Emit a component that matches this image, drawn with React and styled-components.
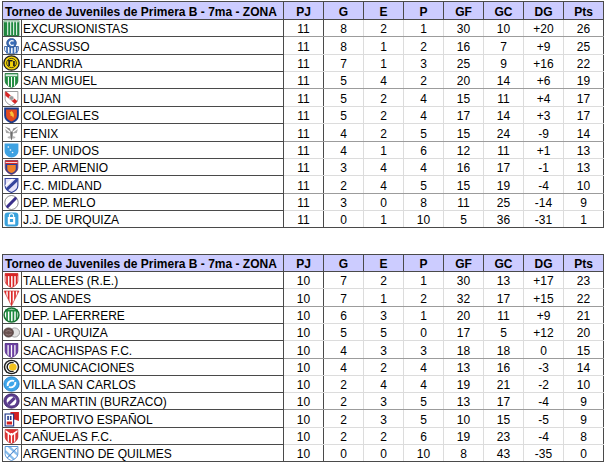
import React from "react";
import styled, { createGlobalStyle } from "styled-components";

const Global = createGlobalStyle`
  html, body { margin: 0; padding: 0; background: #fff; }
  body { font-family: "Liberation Sans", Arial, sans-serif; }
`;

const Page = styled.div`
  display: flex;
  flex-direction: column;
  gap: 26px;
  padding: 1px 0 0 2px;
`;

const Table = styled.table`
  border-collapse: collapse;
  table-layout: fixed;
  width: 601px;
  font-size: 12px;
  color: #000;
`;

const Col = styled.col`
  width: ${(p) => p.$w}px;
`;

const HeadRow = styled.tr`
  height: ${(p) => p.$h}px;
  background: #ccccff;
`;

const HeadTitle = styled.th`
  border: 1px solid #4a4a4a;
  text-align: left;
  padding: 0 0 0 2px;
  font-weight: bold;
  vertical-align: bottom;
  line-height: 14px;
  white-space: nowrap;
  overflow: hidden;
`;

const HeadStat = styled.th`
  border: 1px solid #4a4a4a;
  text-align: center;
  padding: 0;
  font-weight: bold;
  vertical-align: bottom;
  line-height: 14px;
`;

const Row = styled.tr`
  height: ${(p) => p.$h}px;
`;

const IconCell = styled.td`
  border: 1px solid #4a4a4a;
  padding: 0;
  vertical-align: middle;
  line-height: 0;
  svg {
    display: block;
    width: 17px;
    height: 16px;
    margin: 0;
  }
`;

const NameCell = styled.td`
  border: 1px solid #4a4a4a;
  padding: 0 0 0 1px;
  vertical-align: bottom;
  line-height: 14px;
  white-space: nowrap;
  overflow: hidden;
`;

const StatCell = styled.td`
  padding: 0;
  text-align: center;
  vertical-align: bottom;
  line-height: 14px;
  border-left: 1px solid ${(p) => (p.$first ? "#4a4a4a" : "#dcdcdc")};
  border-right: 1px solid ${(p) => (p.$first || p.$last ? "#4a4a4a" : "#dcdcdc")};
  border-bottom: 1px solid
    ${(p) => (p.$lastRow ? "#4a4a4a" : p.$accent ? "#9c9c9c" : "#dcdcdc")};
`;

const SH = "M2 1.5H14V8.5C14 12 11.2 14.3 8 15.6C4.8 14.3 2 12 2 8.5Z";

const Icon = ({ children, id }) => (
  <svg viewBox="0 0 16 16" preserveAspectRatio="none" aria-hidden="true">
    <defs>
      <clipPath id={`c-${id}`}>
        <path d={SH} />
      </clipPath>
      <clipPath id={`o-${id}`}>
        <circle cx="8" cy="8" r="7" />
      </clipPath>
    </defs>
    {children(`url(#c-${id})`, `url(#o-${id})`)}
  </svg>
);

const stripes = (xs, w, color, y = 0, h = 16) =>
  xs.map((x) => <rect key={x} x={x} y={y} width={w} height={h} fill={color} />);

const crests = {
  excursionistas: (id) => (
    <Icon id={id}>
      {() => (
        <g>
          <rect x="1" y="1" width="14" height="14.5" fill="#1f8a3f" stroke="#17702f" strokeWidth="0.8" />
          {stripes([4, 6.8, 9.6, 12.4], 0.9, "#fff", 1.5, 13.5)}
          <rect x="1" y="1" width="14" height="1.3" fill="#fff" opacity="0.6" />
        </g>
      )}
    </Icon>
  ),
  acassuso: (id) => (
    <Icon id={id}>
      {() => (
        <g>
          <path d="M1.5 8.5H14.5V11.5C14.5 14 11 15.8 8 15.8C5 15.8 1.5 14 1.5 11.5Z" fill="#fff" stroke="#2c5597" strokeWidth="0.8" />
          {stripes([3, 6, 9, 12], 1.6, "#3a6cb5", 8.5, 7)}
          <circle cx="8" cy="5" r="4.6" fill="#3a6cb5" stroke="#24467f" strokeWidth="0.6" />
          <path d="M10 3.3A2.3 2.3 0 1 0 10 6.7" fill="none" stroke="#fff" strokeWidth="1.2" />
        </g>
      )}
    </Icon>
  ),
  flandria: (id) => (
    <Icon id={id}>
      {() => (
        <g>
          <circle cx="8" cy="8" r="7.2" fill="#f2d20a" stroke="#1e1e1e" strokeWidth="1.3" />
          <circle cx="8" cy="8" r="4.6" fill="none" stroke="#2a2a10" strokeWidth="0.8" />
          <rect x="5" y="5" width="1.6" height="6" fill="#1e1e1e" />
          <rect x="5" y="5" width="4" height="1.4" fill="#1e1e1e" />
          <rect x="9.5" y="6" width="1.6" height="5" fill="#1e1e1e" />
        </g>
      )}
    </Icon>
  ),
  sanmiguel: (id) => (
    <Icon id={id}>
      {(clip) => (
        <g>
          <path d={SH} fill="#1f8c3e" stroke="#146a2c" strokeWidth="0.7" />
          <g clipPath={clip}>{stripes([4.6, 7.5, 10.4], 1, "#fff", 5, 11)}</g>
          <rect x="2.5" y="2.3" width="11" height="2" fill="#fff" opacity="0.85" />
        </g>
      )}
    </Icon>
  ),
  lujan: (id) => (
    <Icon id={id}>
      {(clip) => (
        <g>
          <path d={SH} fill="#fff" stroke="#8a8a8a" strokeWidth="0.8" />
          <g clipPath={clip}>
            <line x1="1" y1="2" x2="15" y2="15" stroke="#d62626" strokeWidth="3.4" />
          </g>
          <circle cx="8" cy="8" r="2.3" fill="#9a9a9a" stroke="#fff" strokeWidth="0.6" />
        </g>
      )}
    </Icon>
  ),
  colegiales: (id) => (
    <Icon id={id}>
      {() => (
        <g>
          <path d={SH} fill="#e24a1e" stroke="#1d3c8c" strokeWidth="1.8" />
          <path d="M8 4C10 6 11 8 9.5 11C9 9 8 8.5 7 9C7.5 7 6.5 6 6 5C7 5.5 7.5 5 8 4Z" fill="#f9c33a" />
        </g>
      )}
    </Icon>
  ),
  fenix: (id) => (
    <Icon id={id}>
      {() => (
        <g>
          <path d="M1.5 1.5L7.5 7L6.5 3.5ZM14.5 1.5L8.5 7L9.5 3.5Z" fill="#8c8c8c" />
          <path d="M2 4L7.5 8.5L3 8ZM14 4L8.5 8.5L13 8Z" fill="#a8a8a8" />
          <path d="M6.8 6.5H9.2L9 13L8 15.5L7 13Z" fill="#6e6e6e" />
          <path d="M4 12L7 11L6 14ZM12 12L9 11L10 14Z" fill="#b4b4b4" />
        </g>
      )}
    </Icon>
  ),
  defunidos: (id) => (
    <Icon id={id}>
      {() => (
        <g>
          <path d="M1.5 1.5H14.5V9C14.5 12.5 11.5 15.5 8 15.5C4.5 15.5 1.5 12.5 1.5 9Z" fill="#3ea2e2" />
          <circle cx="5" cy="5" r="0.8" fill="#fff" />
          <circle cx="7" cy="8" r="0.8" fill="#fff" />
          <circle cx="9" cy="10.5" r="0.8" fill="#fff" />
        </g>
      )}
    </Icon>
  ),
  armenio: (id) => (
    <Icon id={id}>
      {(clip) => (
        <g>
          <g clipPath={clip}>
            <rect x="0" y="0" width="16" height="5" fill="#d42a2a" />
            <rect x="0" y="3.2" width="16" height="0.8" fill="#fff" />
            <rect x="0" y="5" width="16" height="11" fill="#2a3f9a" />
            <path d="M4 6H12V10C12 12 10 13.5 8 14C6 13.5 4 12 4 10Z" fill="#f08028" />
          </g>
          <path d={SH} fill="none" stroke="#7a2a4a" strokeWidth="0.7" />
        </g>
      )}
    </Icon>
  ),
  midland: (id) => (
    <Icon id={id}>
      {(clip) => (
        <g>
          <path d={SH} fill="#e6e2f8" stroke="#34439c" strokeWidth="1.1" />
          <g clipPath={clip}>
            <line x1="14" y1="2" x2="2" y2="14" stroke="#34439c" strokeWidth="3" />
            <line x1="9" y1="2" x2="2" y2="9" stroke="#fff" strokeWidth="1.2" />
          </g>
        </g>
      )}
    </Icon>
  ),
  merlo: (id) => (
    <Icon id={id}>
      {() => (
        <g>
          <defs>
            <clipPath id="merlo-e">
              <ellipse cx="8" cy="8.5" rx="6.3" ry="7" />
            </clipPath>
          </defs>
          <ellipse cx="8" cy="8.5" rx="6.3" ry="7" fill="#fff" stroke="#777" strokeWidth="0.8" />
          <g clipPath="url(#merlo-e)">
            <line x1="2" y1="15" x2="14" y2="2" stroke="#3a2f8a" strokeWidth="2.8" />
          </g>
        </g>
      )}
    </Icon>
  ),
  urquiza: (id) => (
    <Icon id={id}>
      {() => (
        <g>
          <rect x="1.5" y="1.5" width="13" height="14" rx="3" fill="#3aa2dc" />
          <path d="M6 6V4.8A2 2 0 0 1 10 4.8V6" fill="none" stroke="#fff" strokeWidth="1" />
          <rect x="4.5" y="6" width="7" height="7.5" fill="#fff" />
          <rect x="6.5" y="8" width="3" height="3" fill="#3aa2dc" />
        </g>
      )}
    </Icon>
  ),
  talleres: (id) => (
    <Icon id={id}>
      {(clip) => (
        <g>
          <path d={SH} fill="#fff" stroke="#c02020" strokeWidth="0.7" />
          <g clipPath={clip}>{stripes([3, 6, 9, 12], 1.6, "#d82424", 4, 12)}</g>
          <rect x="2" y="1.5" width="12" height="2.6" fill="#d82424" />
        </g>
      )}
    </Icon>
  ),
  losandes: (id) => (
    <Icon id={id}>
      {() => (
        <g>
          <defs>
            <clipPath id="andes-p">
              <path d="M1 1H15L8 15.8Z" />
            </clipPath>
          </defs>
          <path d="M1 1H15L8 15.8Z" fill="#fff" stroke="#c42424" strokeWidth="0.6" />
          <g clipPath="url(#andes-p)">{stripes([1.5, 4.5, 7.5, 10.5, 13.5], 1.6, "#dc2a2a")}</g>
        </g>
      )}
    </Icon>
  ),
  laferrere: (id) => (
    <Icon id={id}>
      {(_, oclip) => (
        <g>
          <circle cx="8" cy="8" r="7" fill="#fff" />
          <g clipPath={oclip}>{stripes([3, 6, 9, 12], 1.6, "#1f8a3f", 4, 12)}</g>
          <rect x="2" y="2.5" width="12" height="2" fill="#1f8a3f" />
          <circle cx="8" cy="8" r="7" fill="none" stroke="#15702f" strokeWidth="1.4" />
        </g>
      )}
    </Icon>
  ),
  uai: (id) => (
    <Icon id={id}>
      {() => (
        <g>
          <circle cx="11" cy="8.5" r="4.6" fill="#e4e4e4" stroke="#8a8a8a" strokeWidth="0.7" />
          <circle cx="5.2" cy="8.5" r="4.6" fill="#6a5250" stroke="#3e2e2e" strokeWidth="0.7" />
          <path d="M2.5 7.5Q5 5.5 8 7.5M2.5 10Q5 12 8 10" fill="none" stroke="#a89090" strokeWidth="0.6" />
        </g>
      )}
    </Icon>
  ),
  sacachispas: (id) => (
    <Icon id={id}>
      {(clip) => (
        <g>
          <path d={SH} fill="#6c3fa2" />
          <g clipPath={clip}>{stripes([4.2, 7.4, 10.6], 1.2, "#fff", 1, 15)}</g>
          <rect x="2" y="1.5" width="12" height="1.6" fill="#6c3fa2" />
          <path d={SH} fill="none" stroke="#4a2a7a" strokeWidth="0.7" />
        </g>
      )}
    </Icon>
  ),
  comunicaciones: (id) => (
    <Icon id={id}>
      {() => (
        <g>
          <circle cx="8" cy="8" r="7.3" fill="#1e1e1e" />
          <circle cx="8" cy="8" r="5.9" fill="#fff" />
          <path d="M10 3.8A4.5 4.5 0 1 0 10 12.2" fill="none" stroke="#1e1e1e" strokeWidth="1.4" />
          <circle cx="9.3" cy="8" r="3.6" fill="#f2c21e" />
        </g>
      )}
    </Icon>
  ),
  villasancarlos: (id) => (
    <Icon id={id}>
      {() => (
        <g>
          <circle cx="8" cy="8" r="7.2" fill="#3ea6ea" stroke="#1e7cc6" strokeWidth="0.8" />
          <path d="M4.5 10C3.8 6.5 7 3.8 10.5 5" fill="none" stroke="#fff" strokeWidth="1.8" />
          <path d="M11.5 6C12.2 9.5 9 12.2 5.5 11" fill="none" stroke="#fff" strokeWidth="1.8" />
        </g>
      )}
    </Icon>
  ),
  sanmartin: (id) => (
    <Icon id={id}>
      {() => (
        <g>
          <defs>
            <clipPath id="smb-i">
              <circle cx="8" cy="8" r="4.6" />
            </clipPath>
          </defs>
          <circle cx="8" cy="8" r="7.2" fill="#5b3c8e" stroke="#3a2264" strokeWidth="0.8" />
          <circle cx="8" cy="8" r="4.6" fill="#fff" />
          <g clipPath="url(#smb-i)">
            <line x1="3" y1="13" x2="13" y2="3" stroke="#5b3c8e" strokeWidth="3.2" />
          </g>
        </g>
      )}
    </Icon>
  ),
  espanol: (id) => (
    <Icon id={id}>
      {() => (
        <g>
          <path d="M7 1H15V10L11 8.5L7 10Z" fill="#d42020" />
          <rect x="2" y="3" width="8" height="12" fill="#fff" stroke="#22388a" strokeWidth="1.1" />
          <rect x="4" y="5" width="1.5" height="4" fill="#22388a" />
          <rect x="6.5" y="5" width="1.5" height="4" fill="#22388a" />
          <rect x="3.5" y="10.5" width="5" height="3" fill="#d42020" />
        </g>
      )}
    </Icon>
  ),
  canuelas: (id) => (
    <Icon id={id}>
      {(clip) => (
        <g>
          <path d={SH} fill="#e03030" />
          <g clipPath={clip}>
            {stripes([4.4, 7.4, 10.4], 1.2, "#fff", 5, 11)}
            <path d="M1 1L8 6L15 1V3L8 8L1 3Z" fill="#fff" />
          </g>
          <path d={SH} fill="none" stroke="#b02020" strokeWidth="0.6" />
        </g>
      )}
    </Icon>
  ),
  argentino: (id) => (
    <Icon id={id}>
      {(clip) => (
        <g>
          <path d={SH} fill="#fff" />
          <g clipPath={clip}>
            <line x1="2" y1="6" x2="12" y2="16" stroke="#88bdec" strokeWidth="2.2" />
            <line x1="5" y1="1" x2="15" y2="11" stroke="#88bdec" strokeWidth="2.2" />
            <line x1="13" y1="3" x2="4" y2="13" stroke="#4a86cc" strokeWidth="1" />
          </g>
          <path d={SH} fill="none" stroke="#4f8fd4" strokeWidth="0.9" />
        </g>
      )}
    </Icon>
  ),
};

const TITLE = "Torneo de Juveniles de Primera B - 7ma - ZONA";
const HEADS = ["PJ", "G", "E", "P", "GF", "GC", "DG", "Pts"];

const zone1 = [
  ["excursionistas", "EXCURSIONISTAS", 11, 8, 2, 1, 30, 10, "+20", 26],
  ["acassuso", "ACASSUSO", 11, 8, 1, 2, 16, 7, "+9", 25],
  ["flandria", "FLANDRIA", 11, 7, 1, 3, 25, 9, "+16", 22],
  ["sanmiguel", "SAN MIGUEL", 11, 5, 4, 2, 20, 14, "+6", 19],
  ["lujan", "LUJAN", 11, 5, 2, 4, 15, 11, "+4", 17],
  ["colegiales", "COLEGIALES", 11, 5, 2, 4, 17, 14, "+3", 17],
  ["fenix", "FENIX", 11, 4, 2, 5, 15, 24, "-9", 14],
  ["defunidos", "DEF. UNIDOS", 11, 4, 1, 6, 12, 11, "+1", 13],
  ["armenio", "DEP. ARMENIO", 11, 3, 4, 4, 16, 17, "-1", 13],
  ["midland", "F.C. MIDLAND", 11, 2, 4, 5, 15, 19, "-4", 10],
  ["merlo", "DEP. MERLO", 11, 3, 0, 8, 11, 25, "-14", 9],
  ["urquiza", "J.J. DE URQUIZA", 11, 0, 1, 10, 5, 36, "-31", 1],
];

const zone2 = [
  ["talleres", "TALLERES (R.E.)", 10, 7, 2, 1, 30, 13, "+17", 23],
  ["losandes", "LOS ANDES", 10, 7, 1, 2, 32, 17, "+15", 22],
  ["laferrere", "DEP. LAFERRERE", 10, 6, 3, 1, 20, 11, "+9", 21],
  ["uai", "UAI - URQUIZA", 10, 5, 5, 0, 17, 5, "+12", 20],
  ["sacachispas", "SACACHISPAS F.C.", 10, 4, 3, 3, 18, 18, "0", 15],
  ["comunicaciones", "COMUNICACIONES", 10, 4, 2, 4, 13, 16, "-3", 14],
  ["villasancarlos", "VILLA SAN CARLOS", 10, 2, 4, 4, 19, 21, "-2", 10],
  ["sanmartin", "SAN MARTIN (BURZACO)", 10, 2, 3, 5, 13, 17, "-4", 9],
  ["espanol", "DEPORTIVO ESPAÑOL", 10, 2, 3, 5, 10, 15, "-5", 9],
  ["canuelas", "CAÑUELAS F.C.", 10, 2, 2, 6, 19, 23, "-4", 8],
  ["argentino", "ARGENTINO DE QUILMES", 10, 0, 0, 10, 8, 43, "-35", 0],
];

const rowHeight = (i, pitch) => Math.round((i + 1) * pitch) - Math.round(i * pitch);

const Standings = ({ rows, accentOffset, pitch, headH }) => (
  <Table>
    <colgroup>
      <Col $w={19} />
      <Col $w={262} />
      {HEADS.map((h) => (
        <Col key={h} $w={40} />
      ))}
    </colgroup>
    <thead>
      <HeadRow $h={headH}>
        <HeadTitle colSpan={2}>{TITLE}</HeadTitle>
        {HEADS.map((h) => (
          <HeadStat key={h}>{h}</HeadStat>
        ))}
      </HeadRow>
    </thead>
    <tbody>
      {rows.map(([key, name, ...stats], i) => {
        const lastRow = i === rows.length - 1;
        const accent = i % 3 === accentOffset;
        return (
          <Row key={key} $h={rowHeight(i, pitch)}>
            <IconCell>{crests[key](key)}</IconCell>
            <NameCell>{name}</NameCell>
            {stats.map((v, j) => (
              <StatCell
                key={j}
                $first={j === 0}
                $last={j === stats.length - 1}
                $lastRow={lastRow}
                $accent={accent}
              >
                {v}
              </StatCell>
            ))}
          </Row>
        );
      })}
    </tbody>
  </Table>
);

export default function App() {
  return (
    <>
      <Global />
      <Page>
        <Standings rows={zone1} accentOffset={0} pitch={17.36} headH={18} />
        <Standings rows={zone2} accentOffset={1} pitch={17.3} headH={17} />
      </Page>
    </>
  );
}
